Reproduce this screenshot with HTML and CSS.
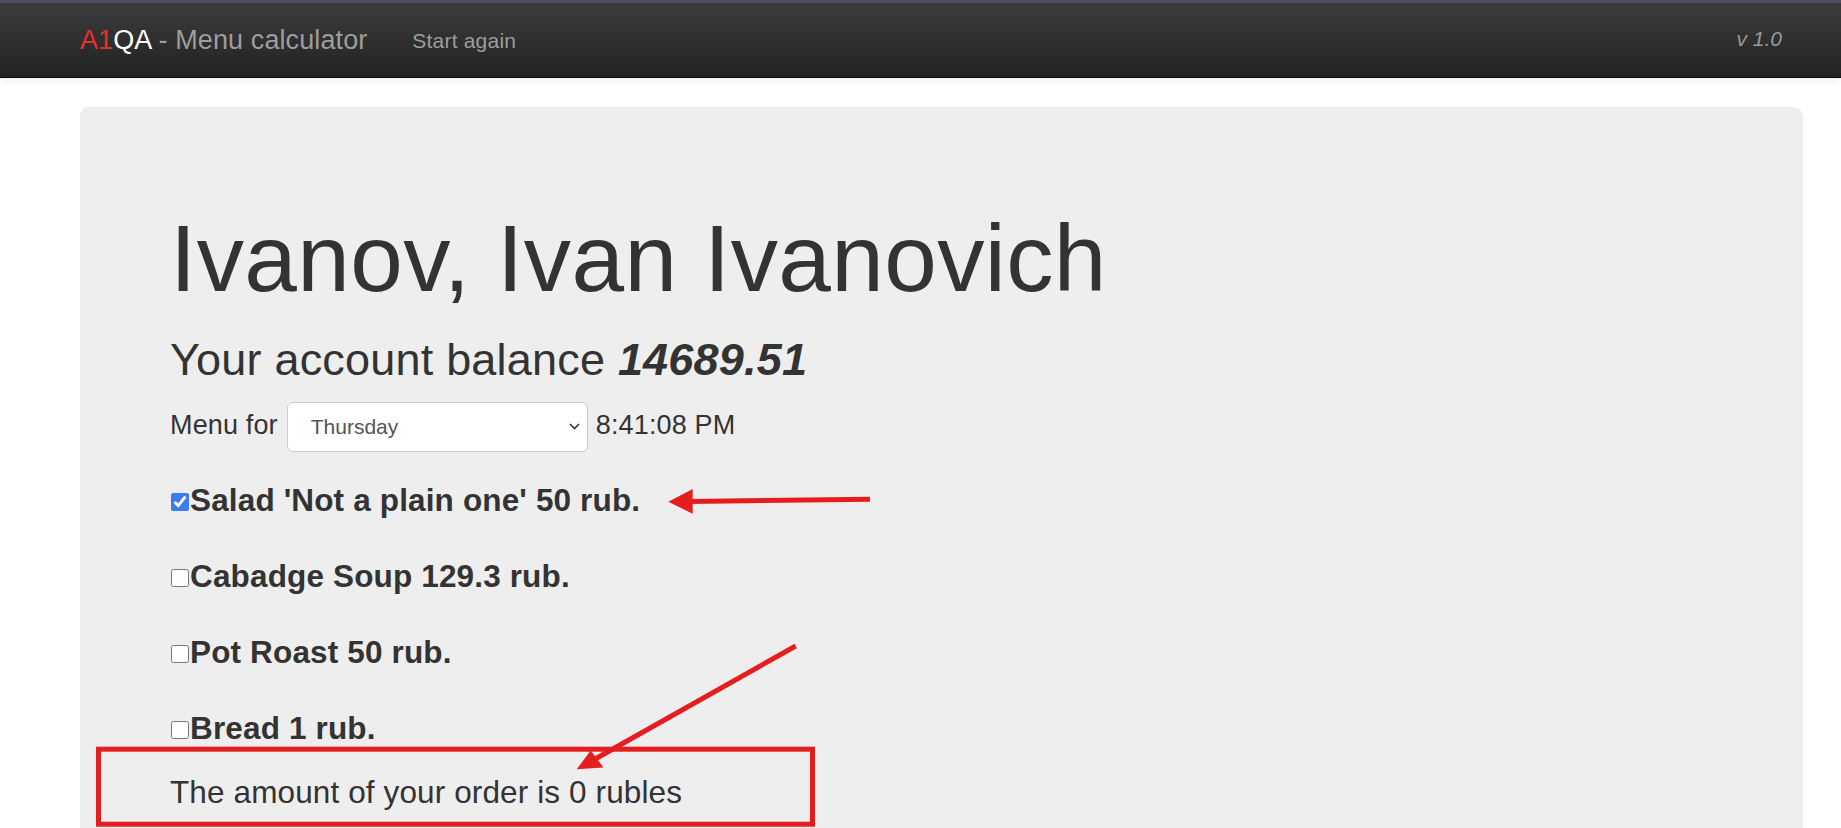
FILE: index.html
```html
<!DOCTYPE html>
<html lang="en">
<head>
<meta charset="utf-8">
<title>A1QA - Menu calculator</title>
<link rel="stylesheet" href="styles.css">
</head>
<body>
<nav class="navbar">
  <div class="navbar-inner">
    <a class="brand"><span class="brand-a1">A1</span><span class="brand-qa">QA</span> - Menu calculator</a>
    <a class="nav-link">Start again</a>
    <span class="version">v 1.0</span>
  </div>
</nav>

<main class="jumbotron">
  <h1 class="name">Ivanov, Ivan Ivanovich</h1>
  <h2 class="balance">Your account balance <em class="amount">14689.51</em></h2>
  <div class="menu-row">
    <span class="menu-label">Menu for</span>
    <div class="select-wrap">
      <select class="day-select">
        <option>Monday</option>
        <option>Tuesday</option>
        <option>Wednesday</option>
        <option selected>Thursday</option>
        <option>Friday</option>
      </select>
      <svg class="chevron" width="11" height="7" viewBox="0 0 11 7"><path d="M1 1 L5.5 5.5 L10 1" fill="none" stroke="#333" stroke-width="1.6"/></svg>
    </div>
    <span class="time">8:41:08 PM</span>
  </div>
  <label class="item"><input type="checkbox" class="check" checked>Salad 'Not a plain one' 50 rub.</label>
  <label class="item"><input type="checkbox" class="check">Cabadge Soup 129.3 rub.</label>
  <label class="item"><input type="checkbox" class="check">Pot Roast 50 rub.</label>
  <label class="item"><input type="checkbox" class="check">Bread 1 rub.</label>
  <p class="total">The amount of your order is 0 rubles</p>
</main>

<svg class="annotations" width="1841" height="828" viewBox="0 0 1841 828">
  <line x1="870" y1="499.3" x2="690" y2="501.5" stroke="#e41d1f" stroke-width="5"/>
  <polygon points="668.3,501.7 692.7,489 692.7,513.8" fill="#e41d1f"/>
  <line x1="795.7" y1="646" x2="596" y2="758.5" stroke="#e41d1f" stroke-width="5"/>
  <polygon points="576.7,769.3 603.5,767.5 590.7,750.5" fill="#e41d1f"/>
  <rect x="98.5" y="749.2" width="714" height="75" fill="none" stroke="#e41d1f" stroke-width="5"/>
</svg>
</body>
</html>
```

FILE: styles.css
```css
html, body {
  margin: 0;
  padding: 0;
  overflow: hidden;
  background: #fff;
}

body {
  font-family: "Liberation Sans", Arial, sans-serif;
  color: #333;
  position: relative;
  height: 828px;
}

/* Navbar */
.navbar {
  border-top: 3px solid #4f4d60;
  border-bottom: 1px solid #080808;
  height: 74px;
  background: linear-gradient(to bottom, #3c3c3c 0%, #222 100%);
  box-shadow: 0 2px 8px rgba(0, 0, 0, 0.08);
}

.navbar-inner {
  display: flex;
  align-items: flex-start;
  padding: 0 59px 0 80px;
}

.brand {
  padding: 22px 22.5px 0 0;
  font-size: 27px;
  line-height: 30px;
  letter-spacing: 0.1px;
  color: #9d9d9d;
  text-decoration: none;
  white-space: nowrap;
}

.brand-a1 {
  color: #e5302a;
}

.brand-qa {
  color: #fff;
}

.nav-link {
  padding: 22.5px 22.5px 0;
  font-size: 21px;
  line-height: 30px;
  letter-spacing: 0.2px;
  color: #9d9d9d;
  text-decoration: none;
}

.version {
  margin-left: auto;
  padding-top: 21px;
  font-size: 21px;
  line-height: 30px;
  font-style: italic;
  color: #999;
}

/* Jumbotron */
.jumbotron {
  margin: 29px 38px 0 80px;
  padding: 72px 90px 72px;
  background: #eee;
  border-radius: 9px;
}

.name {
  margin: 27px 0 0;
  font-size: 94.5px;
  line-height: 104px;
  font-weight: normal;
  letter-spacing: 0.4px;
}

.balance {
  margin: 25.4px 0 0;
  font-size: 45px;
  line-height: 49.5px;
  font-weight: normal;
  letter-spacing: 0.2px;
}

.amount {
  font-weight: bold;
  font-style: italic;
}

.menu-row {
  margin-top: 17px;
  display: flex;
  align-items: baseline;
  gap: 8px;
  font-size: 27px;
  line-height: 32px;
  letter-spacing: 0.15px;
}

.menu-label {
  margin-right: 1px;
}

.select-wrap {
  position: relative;
  display: flex;
  letter-spacing: 0;
}

.day-select {
  -webkit-appearance: none;
  appearance: none;
  box-sizing: border-box;
  width: 301px;
  height: 50px;
  padding: 9px 30px 9px 23px;
  border: 1px solid #ccc;
  border-radius: 6px;
  background: #fff;
  font-family: "Liberation Sans", Arial, sans-serif;
  font-size: 21px;
  line-height: 30px;
  color: #555;
}

.chevron {
  position: absolute;
  right: 8px;
  top: 21.5px;
  pointer-events: none;
}

.item {
  display: block;
  margin-top: 41.35px;
  font-size: 31.5px;
  line-height: 34.65px;
  font-weight: bold;
  letter-spacing: 0.15px;
}

.menu-row + .item {
  margin-top: 31.5px;
}

.check {
  width: 18px;
  height: 18px;
  margin: 0 1.5px 0 0.5px;
  accent-color: #3b7cf0;
}

.total {
  margin: 28.85px 0 0;
  font-size: 31.5px;
  line-height: 34.65px;
  letter-spacing: 0.12px;
}

/* Annotation overlay */
.annotations {
  position: absolute;
  top: 0;
  left: 0;
  pointer-events: none;
}
```
